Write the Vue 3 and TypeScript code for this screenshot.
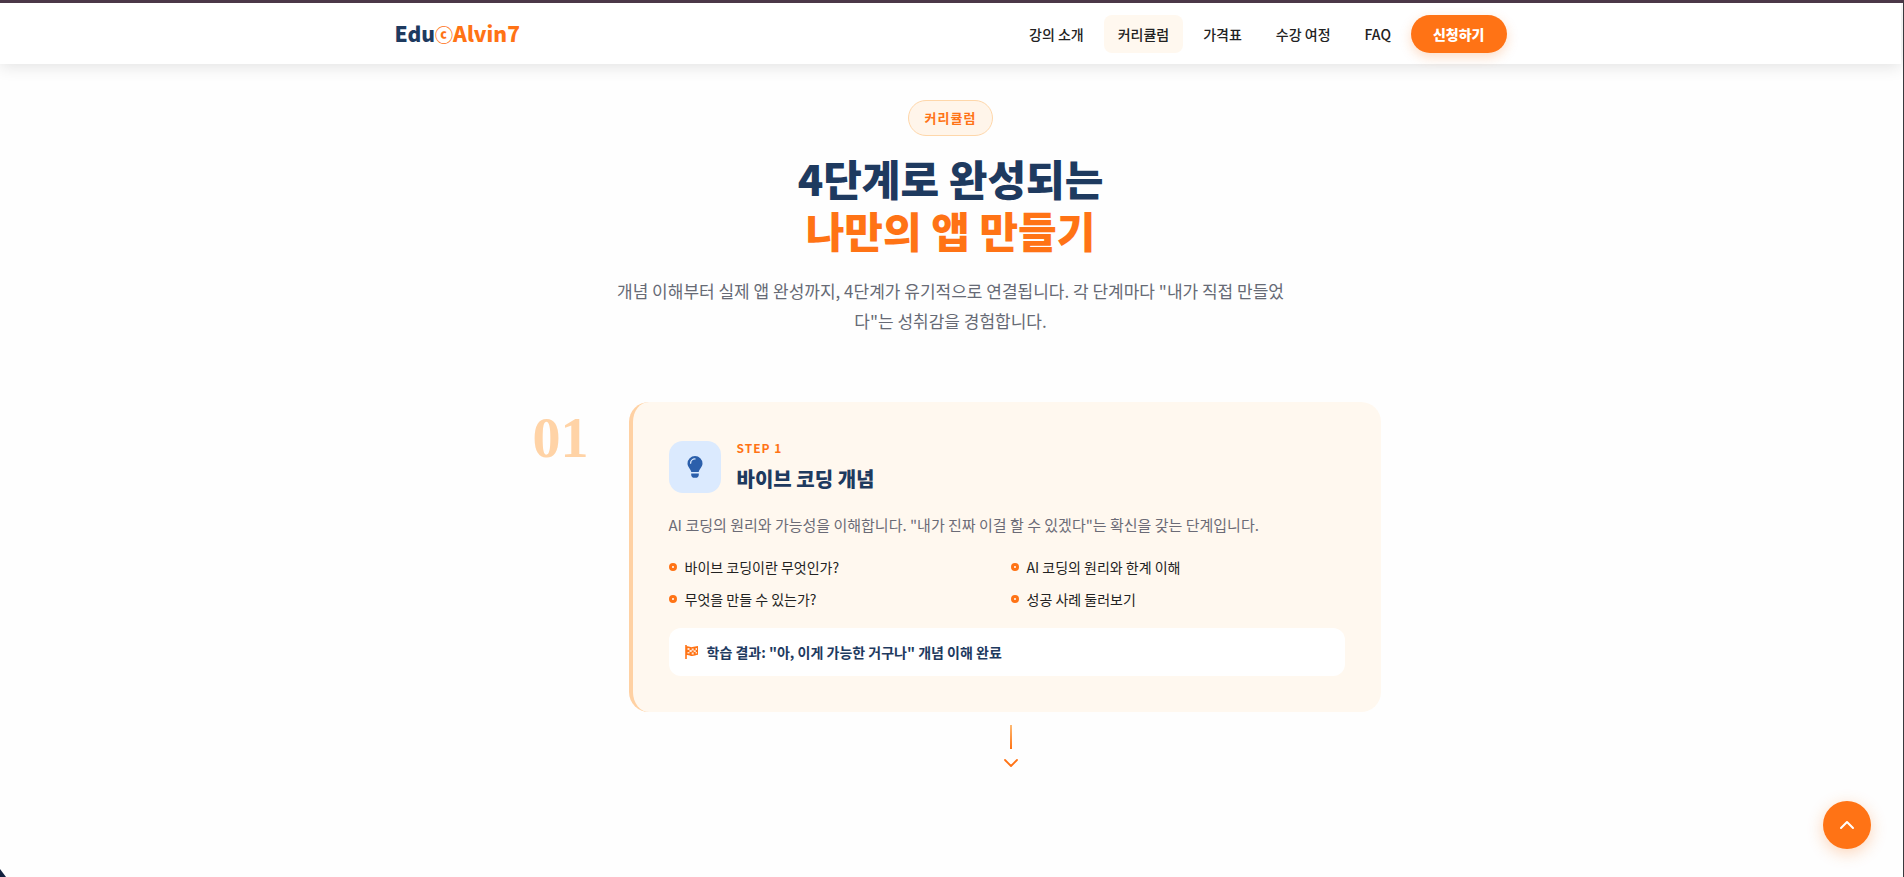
<script setup lang="ts">
interface NavItem {
  label: string
  href: string
  active?: boolean
}

interface Step {
  number: string
  tag: string
  title: string
  description: string
  topics: string[]
  result: string
}

const navItems: NavItem[] = [
  { label: '강의 소개', href: '#about' },
  { label: '커리큘럼', href: '#curriculum', active: true },
  { label: '가격표', href: '#pricing' },
  { label: '수강 여정', href: '#journey' },
  { label: 'FAQ', href: '#faq' },
]

const steps: Step[] = [
  {
    number: '01',
    tag: 'STEP 1',
    title: '바이브 코딩 개념',
    description:
      'AI 코딩의 원리와 가능성을 이해합니다. "내가 진짜 이걸 할 수 있겠다"는 확신을 갖는 단계입니다.',
    topics: [
      '바이브 코딩이란 무엇인가?',
      'AI 코딩의 원리와 한계 이해',
      '무엇을 만들 수 있는가?',
      '성공 사례 둘러보기',
    ],
    result: '학습 결과: "아, 이게 가능한 거구나" 개념 이해 완료',
  },
]

function scrollToTop(): void {
  window.scrollTo({ top: 0, behavior: 'smooth' })
}
</script>

<template>
  <div class="page">
    <header class="header">
      <div class="header-inner">
        <a class="logo" href="#top">Edu<span class="logo-accent"><span class="logo-mark">ⓒ</span>Alvin7</span></a>
        <nav class="nav">
          <a
            v-for="item in navItems"
            :key="item.href"
            :href="item.href"
            class="nav-link"
            :class="{ active: item.active }"
          >{{ item.label }}</a>
          <a href="#apply" class="nav-cta">신청하기</a>
        </nav>
      </div>
    </header>

    <main id="curriculum" class="curriculum">
      <div class="intro">
        <span class="badge">커리큘럼</span>
        <h1 class="heading">4단계로 완성되는<br /><span>나만의 앱 만들기</span></h1>
        <p class="lead">
          개념 이해부터 실제 앱 완성까지, 4단계가 유기적으로 연결됩니다. 각 단계마다 "내가 직접 만들었다"는 성취감을 경험합니다.
        </p>
      </div>

      <section v-for="step in steps" :key="step.number" class="step">
        <div class="step-number">{{ step.number }}</div>
        <article class="card">
          <div class="card-head">
            <div class="card-icon">
              <svg viewBox="0 0 16 24" width="16" height="24" aria-hidden="true">
                <path d="M8 1a7.500 7.500 0 0 0-7.500 7.500c0 3.600 3 5 3.800 8.500h7.400c.8-3.500 3.800-4.900 3.800-8.500A7.500 7.500 0 0 0 8 1z" fill="#2b5fab" />
                <path d="M3.600 8.200A4.400 4.400 0 0 1 8 3.900" fill="none" stroke="#dbeafe" stroke-width="1.300" stroke-linecap="round" />
                <path d="M4.200 18.600h7.600v.8a3.400 3.400 0 0 1-3.400 3.400h-.8a3.400 3.400 0 0 1-3.400-3.400z" fill="#2b5fab" />
              </svg>
            </div>
            <div>
              <p class="card-tag">{{ step.tag }}</p>
              <h2 class="card-title">{{ step.title }}</h2>
            </div>
          </div>
          <p class="card-text">{{ step.description }}</p>
          <ul class="topics">
            <li v-for="topic in step.topics" :key="topic">{{ topic }}</li>
          </ul>
          <div class="result">
            <svg viewBox="0 0 14 14" width="14" height="14" aria-hidden="true">
              <path d="M1 0v14" stroke="#ff7315" stroke-width="1.600" />
              <path d="M1 1.500c2.500-1.200 4 .9 6.300.6 2-.2 3.500-.9 5.700-1.100v8.800c-2.200.4-3.700 1.200-5.700 1.200-2.300 0-3.800-1.700-6.300-.8z" fill="#ff7315" />
              <path d="M2.500 3h2v2h-2zM6.700 3.600h2v1.800h-2zM4.500 5h2.200v1.900H4.500zM8.700 5.200h2.100V7H8.700zM10.600 3h1.400v2h-1.400zM2.500 7h2v1.600h-2zM6.700 7.400h2v2h-2zM10.600 7h1.400v1.600h-1.400z" fill="#fff" opacity=".8" />
            </svg>
            <span>{{ step.result }}</span>
          </div>
        </article>
      </section>

      <div class="connector">
        <span class="connector-line"></span>
        <svg viewBox="0 0 14 10" width="14" height="10" aria-hidden="true">
          <path d="M1 2l6 6 6-6" fill="none" stroke="#ff7315" stroke-width="1.800" stroke-linecap="round" stroke-linejoin="round" />
        </svg>
      </div>
    </main>

    <button class="to-top" type="button" aria-label="맨 위로" @click="scrollToTop">
      <svg viewBox="0 0 16 10" width="16" height="10" aria-hidden="true">
        <path d="M2 8l6-6 6 6" fill="none" stroke="#fff" stroke-width="2" stroke-linecap="round" stroke-linejoin="round" />
      </svg>
    </button>
    <span class="corner"></span>
  </div>
</template>

<style>
body {
  margin: 0;
  background: #fefefe;
}
</style>

<style scoped>
.page {
  position: relative;
  box-sizing: border-box;
  min-height: 100vh;
  overflow: hidden;
  padding-right: 2px;
  border-top: 3px solid #4b3848;
  border-right: 1px solid #3a3a3e;
  background: #fefefe;
  color: #222;
  font-family: "Noto Sans CJK KR", "Noto Sans", sans-serif;
}

.page *,
.page *::before {
  box-sizing: border-box;
}

a {
  text-decoration: none;
}

h1,
h2,
p,
ul {
  margin: 0;
  padding: 0;
}

.header {
  background: #fff;
  box-shadow: 0 2px 16px rgba(0, 0, 0, 0.12);
}

.header-inner {
  display: flex;
  align-items: center;
  justify-content: space-between;
  max-width: 1160px;
  height: 61px;
  margin: 0 auto;
  padding: 0 24px;
}

.logo {
  color: #1e3a5f;
  font-size: 21px;
  font-weight: 900;
  line-height: 32px;
}

.logo-accent {
  color: #ff7315;
}

.logo-mark {
  font-size: 18px;
}

.nav {
  display: flex;
  align-items: center;
  gap: 6px;
}

.nav-link {
  padding: 8px 14px;
  border-radius: 8px;
  color: #222;
  font-size: 14px;
  font-weight: 500;
  line-height: 22px;
}

.nav-link.active {
  background: #fff8ef;
}

.nav-cta {
  padding: 8px 22px;
  border-radius: 20px;
  background: #ff7315;
  box-shadow: 0 4px 12px rgba(249, 115, 22, 0.25);
  color: #fff;
  font-size: 14px;
  font-weight: 900;
  line-height: 22px;
}

.curriculum {
  max-width: 860px;
  margin: 0 auto;
  padding-top: 36px;
}

.intro {
  display: flex;
  flex-direction: column;
  align-items: center;
  margin-bottom: 66px;
  text-align: center;
}

.badge {
  padding: 6px 16px;
  border: 1px solid #fed7aa;
  border-radius: 18px;
  background: #fff5ea;
  color: #ff7315;
  font-size: 13px;
  font-weight: 700;
  letter-spacing: 1px;
  line-height: 22px;
}

.heading {
  margin-top: 16px;
  color: #1e3a5f;
  font-size: 42px;
  font-weight: 900;
  line-height: 52px;
}

.heading span {
  color: #ff7315;
}

.lead {
  max-width: 680px;
  margin-top: 20px;
  color: #666a75;
  font-size: 17px;
  line-height: 30px;
}

.step {
  display: grid;
  grid-template-columns: 80px 1fr;
  gap: 28px;
}

.step-number {
  padding-top: 4px;
  color: #ffd3a6;
  font-family: "Liberation Serif", serif;
  font-size: 56px;
  font-weight: 700;
  line-height: 64px;
  text-align: center;
}

.card {
  padding: 36px;
  border-left: 4px solid #ffd1a3;
  border-radius: 20px;
  background: #fff8ef;
}

.card-head {
  display: flex;
  align-items: center;
  gap: 16px;
}

.card-icon {
  display: flex;
  align-items: center;
  justify-content: center;
  width: 52px;
  height: 52px;
  border-radius: 14px;
  background: #dbeafe;
}

.card-tag {
  margin-bottom: 4px;
  color: #ff7315;
  font-size: 12px;
  font-weight: 700;
  letter-spacing: 1px;
  line-height: 20px;
}

.card-title {
  color: #1e3a5f;
  font-size: 20px;
  font-weight: 900;
  line-height: 34px;
}

.card-text {
  margin-top: 16px;
  color: #6b6b76;
  font-size: 15px;
  line-height: 26px;
}

.topics {
  display: grid;
  grid-template-columns: 1fr 1fr;
  gap: 8px;
  margin-top: 17px;
  list-style: none;
}

.topics li {
  display: flex;
  align-items: center;
  gap: 8px;
  font-size: 14px;
  line-height: 24px;
}

.topics li::before {
  width: 8px;
  height: 8px;
  border: 3px solid #ff7315;
  border-radius: 50%;
  background: #fff;
  content: "";
}

.result {
  display: flex;
  align-items: center;
  gap: 8px;
  margin-top: 17px;
  padding: 12px 16px;
  border-radius: 12px;
  background: #fff;
  color: #1e3a5f;
  font-size: 14px;
  font-weight: 700;
  line-height: 24px;
}

.connector {
  display: flex;
  flex-direction: column;
  align-items: center;
  gap: 9px;
  margin-left: 120px;
  padding-top: 13px;
}

.connector-line {
  width: 2px;
  height: 24px;
  background: linear-gradient(#fdba74, #ff7315);
}

.to-top {
  position: absolute;
  right: 32px;
  bottom: 28px;
  display: flex;
  align-items: center;
  justify-content: center;
  width: 48px;
  height: 48px;
  padding: 0;
  border: 0;
  border-radius: 50%;
  background: #ff7315;
  box-shadow: 0 4px 16px rgba(249, 115, 22, 0.3);
  cursor: pointer;
}

.corner {
  position: absolute;
  bottom: 0;
  left: 0;
  width: 6px;
  height: 8px;
  background: #12213f;
  clip-path: polygon(0 0, 100% 100%, 0 100%);
}
</style>
